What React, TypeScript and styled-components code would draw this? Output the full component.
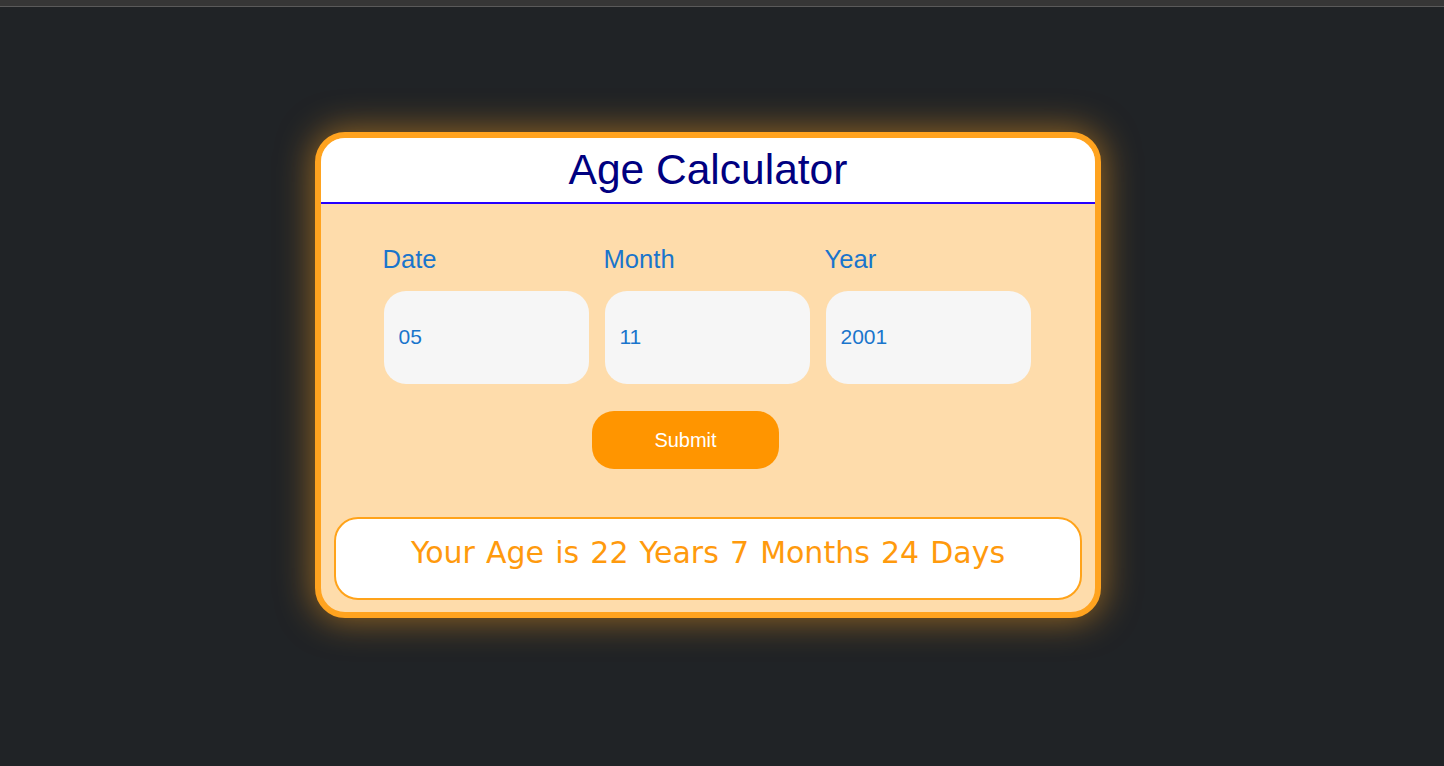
import React from "react";
import styled, { createGlobalStyle } from "styled-components";

const GlobalStyle = createGlobalStyle`
  html, body {
    margin: 0;
    padding: 0;
    background: #202326;
  }
  body {
    font-family: "Liberation Sans", Arial, sans-serif;
  }
`;

const TopBar = styled.div`
  height: 6px;
  background: #363636;
  border-bottom: 1px solid #5a5a5a;
`;

const Page = styled.div`
  min-height: 759px;
  display: flex;
  justify-content: center;
  align-items: flex-start;
  padding: 125px 28px 0 0;
  box-sizing: border-box;
`;

const Card = styled.div`
  width: 786px;
  box-sizing: border-box;
  border: 6px solid #ffa31f;
  border-radius: 30px;
  background: #fedcab;
  overflow: hidden;
  box-shadow: 0 0 34px 3px rgba(255, 163, 31, 0.5);
  display: flex;
  flex-direction: column;
`;

const Header = styled.div`
  background: #ffffff;
  height: 64px;
  border-bottom: 2px solid #2600ff;
  display: flex;
  align-items: center;
  justify-content: center;
`;

const Title = styled.h1`
  margin: 0;
  font-family: "Liberation Sans", Arial, sans-serif;
  font-weight: 400;
  font-size: 42.5px;
  color: #000080;
  line-height: 1;
  padding-top: 1px;
`;

const Fields = styled.div`
  display: flex;
  justify-content: center;
  gap: 16px;
  padding: 40px 2px 0 0;
`;

const Field = styled.div`
  display: flex;
  flex-direction: column;
  width: 205px;
`;

const Label = styled.label`
  font-family: "Liberation Sans", Arial, sans-serif;
  font-size: 25.6px;
  color: #1a75cc;
  line-height: 30px;
  margin-left: -1px;
`;

const Input = styled.input`
  margin-top: 17px;
  height: 93px;
  box-sizing: border-box;
  border: none;
  outline: none;
  border-radius: 22px;
  background: #f6f6f6;
  padding: 0 15px 2px;
  font-family: "Liberation Sans", Arial, sans-serif;
  font-size: 21px;
  color: #1a75cc;
`;

const ButtonRow = styled.div`
  display: flex;
  justify-content: center;
  padding: 27px 45px 0 0;
`;

const SubmitButton = styled.button`
  width: 187px;
  height: 58px;
  border: none;
  border-radius: 22px;
  background: #ff9500;
  color: #ffffff;
  font-family: "Liberation Sans", Arial, sans-serif;
  font-size: 20px;
  cursor: pointer;
`;

const Result = styled.div`
  margin: 48px 13px 12px;
  height: 83px;
  box-sizing: border-box;
  border: 2px solid #ffa31a;
  border-radius: 24px;
  background: #ffffff;
  display: flex;
  justify-content: center;
  padding-top: 16px;
`;

const ResultText = styled.p`
  margin: 0;
  font-family: "DejaVu Sans", Verdana, sans-serif;
  font-size: 30px;
  line-height: 35px;
  word-spacing: 1.6px;
  color: #ff9a0d;
`;

export default function App() {
  return (
    <>
      <GlobalStyle />
      <TopBar />
      <Page>
        <Card>
          <Header>
            <Title>Age Calculator</Title>
          </Header>
          <Fields>
            <Field>
              <Label>Date</Label>
              <Input defaultValue="05" />
            </Field>
            <Field>
              <Label>Month</Label>
              <Input defaultValue="11" />
            </Field>
            <Field>
              <Label>Year</Label>
              <Input defaultValue="2001" />
            </Field>
          </Fields>
          <ButtonRow>
            <SubmitButton>Submit</SubmitButton>
          </ButtonRow>
          <Result>
            <ResultText>Your Age is 22 Years 7 Months 24 Days</ResultText>
          </Result>
        </Card>
      </Page>
    </>
  );
}
